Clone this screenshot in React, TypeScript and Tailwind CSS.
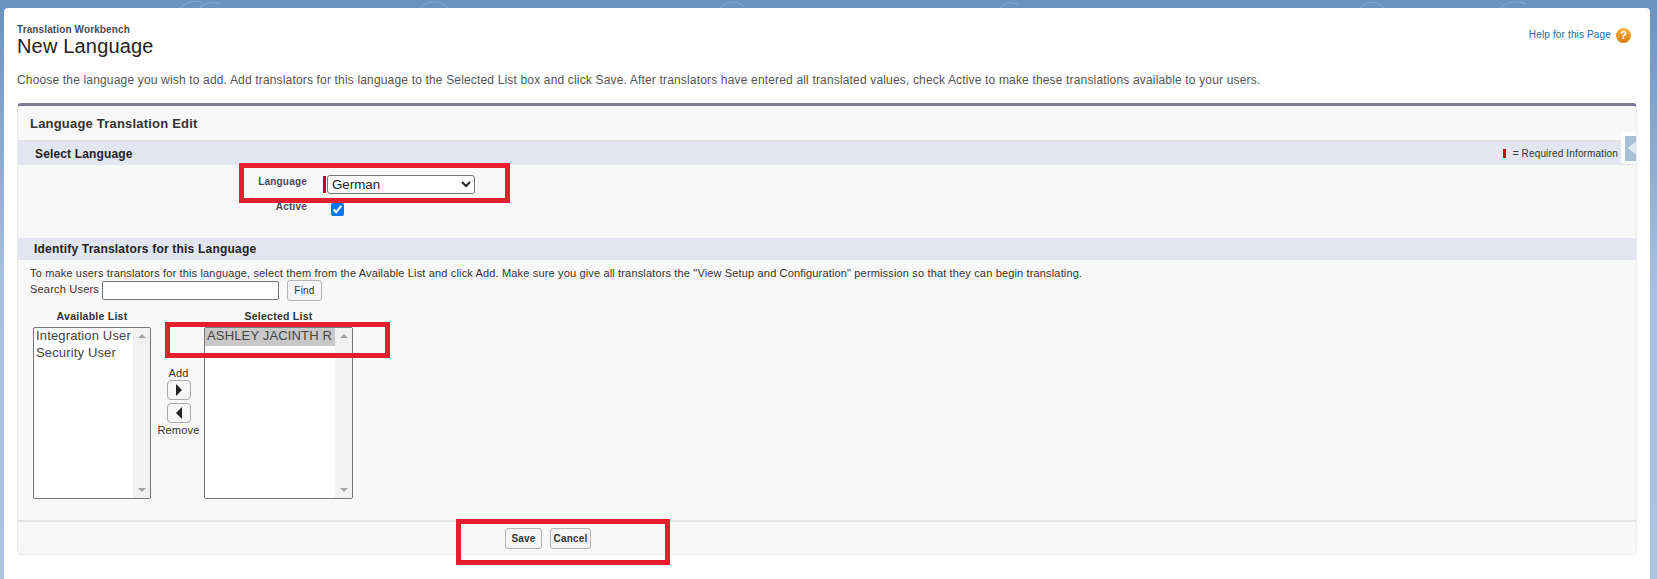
import React from "react";

function ListBox({ items, selected, widthClass }: { items: string[]; selected?: boolean; widthClass: string }) {
  return (
    <div className={`${widthClass} relative flex h-[172px] rounded-[2px] border border-[#767676] bg-white`}>
      <div className="-mt-[1px] min-w-0 flex-1 text-[13px] leading-[17px] tracking-[0.15px] text-[#444]">
        {items.map((it, i) => (
          <div key={it} className={`whitespace-nowrap pl-[2px] ${selected && i === 0 ? "mt-[1px] h-[18px] bg-[#c8c8c8] leading-[15px]" : "h-[17px]"}`}>
            {it}
          </div>
        ))}
      </div>
      <div className="flex h-full w-[17px] flex-col items-center justify-between bg-[#f1f1f1] py-[6px]">
        <div className="h-0 w-0 border-x-[4px] border-b-[4px] border-x-transparent border-b-[#a3a3a3]" />
        <div className="h-0 w-0 border-x-[4px] border-t-[4px] border-x-transparent border-t-[#a3a3a3]" />
      </div>
    </div>
  );
}

function ArrowButton({ dir }: { dir: "left" | "right" }) {
  return (
    <button className="flex h-[20px] w-[24px] items-center justify-center rounded-[4px] border border-[#a9a9a9] bg-[#f6f6f6]">
      {dir === "right" ? (
        <span className="h-0 w-0 border-y-[6px] border-l-[6px] border-y-transparent border-l-[#222]" />
      ) : (
        <span className="h-0 w-0 border-y-[6px] border-r-[6px] border-y-transparent border-r-[#222]" />
      )}
    </button>
  );
}

function PageButton({ children, className }: { children: React.ReactNode; className: string }) {
  return (
    <button className={`${className} h-[21px] rounded-[3px] border border-[#b5b5b5] bg-[#f5f5f5] text-center text-[10px] font-bold leading-[19px] tracking-[0.2px] text-[#333]`}>
      {children}
    </button>
  );
}

function RedBox({ className }: { className: string }) {
  return <div className={`pointer-events-none absolute border-[5px] border-[#e61e2d] ${className}`} />;
}

export default function App() {
  return (
    <div
      className="relative h-[579px] w-[1657px] overflow-hidden bg-gradient-to-b from-[#6a93c1] via-[#a9c0e2] to-[#aec2e2] pl-[4px] pr-[7px] pt-[8px] text-[#333]"
      style={{ fontFamily: '"Liberation Sans", Arial, sans-serif' }}
    >
      <svg className="absolute left-0 top-0 h-[8px] w-[1657px]" viewBox="0 0 1657 8" fill="none" stroke="#86a9cf" strokeWidth="1">
        <path d="M180 8c6-6 14-8 22-6M200 8c5-5 12-7 20-4M420 8c8-8 20-8 28 0M720 8c6-7 16-8 24-2M1000 8c5-6 12-7 18-3M1360 8c6-7 16-8 24 0M1500 8c8-6 16-8 26-4" />
      </svg>
      <div className="relative flex h-full flex-col rounded-t-[4px] bg-white pl-[13px] pr-[13px]">
        <div className="flex h-[54px] items-start justify-between">
          <div>
            <div className="pt-[16px] text-[10px] font-bold leading-[12px] tracking-[0.12px] text-[#4a4a56]">Translation Workbench</div>
            <h1 className="-mt-[1px] text-[20px] font-normal leading-[23px] tracking-[0.17px] text-[#222]">New Language</h1>
          </div>
          <div className="flex items-center gap-[5px] pr-[6px] pt-[16px]">
            <a className="text-[10px] leading-[22px] tracking-[0.15px] text-[#1b6aa5]">Help for this Page</a>
            <span className="flex h-[15px] w-[15px] items-center justify-center rounded-full bg-gradient-to-b from-[#f6b73c] to-[#d97a0c] text-[11px] font-bold leading-none text-white">?</span>
          </div>
        </div>

        <p className="mt-[10px] text-[12px] leading-[16px] tracking-[0.165px] text-[#555]">
          Choose the language you wish to add. Add translators for this language to the Selected List box and click Save. After translators have entered all translated values, check Active to make these translations available to your users.
        </p>

        <div className="relative mt-[15px] h-[452px] rounded-[4px] border-x border-b border-t-[3px] border-[#ececec] border-t-[#7b7b96] bg-[#f8f8f8]">
          <div className="flex h-[36px] items-center border-b-2 border-[#e3e3e3] pl-[12px] pt-[1px] text-[13px] font-bold tracking-[0.2px] text-[#333]">
            Language Translation Edit
          </div>

          <div className="flex h-[23px] items-center justify-between bg-[#e3e6f0] pl-[17px] pr-[6px]">
            <span className="text-[12px] font-bold tracking-[0.15px] text-[#222]">Select Language</span>
            <span className="mb-[1px] flex items-center gap-[7px] pr-[12px] text-[10px] tracking-[0.15px] text-[#333]">
              <span className="h-[9px] w-[3px] bg-[#c00]" />= Required Information
            </span>
          </div>

          <div className="h-[73px]">
            <div className="flex h-[35px] items-start pt-[10px]">
              <label className="mt-[1px] w-[289px] text-right text-[10px] font-bold leading-[12px] tracking-[0.2px] text-[#4a4a56]">Language</label>
              <span className="ml-[16px] mt-[1px] h-[17px] w-[3px] bg-[#c00]" />
              <select className="ml-[1px] h-[19px] w-[148px] rounded-[3px] border border-[#767676] bg-white text-[13.3px] leading-[17px] text-[#222]" defaultValue="German">
                <option>German</option>
              </select>
            </div>
            <div className="flex items-start">
              <label className="mt-[1px] w-[289px] text-right text-[10px] font-bold leading-[12px] tracking-[0.2px] text-[#4a4a56]">Active</label>
              <input type="checkbox" defaultChecked className="ml-[24px] mt-[3px] h-[13px] w-[13px]" />
            </div>
          </div>

          <div className="flex h-[22px] items-center bg-[#e3e6f0] pb-[1px] pl-[16px] text-[12px] font-bold tracking-[0.2px] text-[#222]">
            Identify Translators for this Language
          </div>

          <div className="pl-[12px]">
            <p className="pt-[7px] text-[11px] leading-[13px] tracking-[0.155px] text-[#333]">
              To make users translators for this language, select them from the Available List and click Add. Make sure you give all translators the "View Setup and Configuration" permission so that they can begin translating.
            </p>
            <div className="flex h-[20px] items-center">
              <span className="mb-[2px] w-[72px] text-[11px] tracking-[0.2px] text-[#333]">Search Users</span>
              <input className="h-[19px] w-[177px] rounded-[2px] border border-[#767676] bg-white" />
              <PageButton className="ml-[8px] w-[35px] font-normal">Find</PageButton>
            </div>

            <div className="mt-[8px] flex items-start pl-[3px]">
              <div className="flex flex-col items-center">
                <div className="h-[19px] text-[10.5px] font-bold leading-[16px] tracking-[0.25px] text-[#333]">Available List</div>
                <ListBox items={["Integration User", "Security User"]} widthClass="w-[118px]" />
              </div>
              <div className="flex w-[55px] flex-col items-center pt-[59px]">
                <div className="h-[13px] text-[11px] leading-[13px] tracking-[0.15px] text-[#333]">Add</div>
                <ArrowButton dir="right" />
                <div className="h-[3px]" />
                <ArrowButton dir="left" />
                <div className="pt-[1px] text-[11px] leading-[13px] tracking-[0.2px] text-[#333]">Remove</div>
              </div>
              <div className="-ml-[2px] flex flex-col items-center">
                <div className="h-[19px] text-[10.5px] font-bold leading-[16px] tracking-[0.25px] text-[#333]">Selected List</div>
                <ListBox items={["ASHLEY JACINTH R"]} selected widthClass="w-[149px]" />
              </div>
            </div>
          </div>

          <div className="absolute bottom-0 left-0 right-0 flex h-[34px] items-start gap-[8px] border-t-2 border-[#e3e3e3] pl-[487px] pt-[6px]">
            <PageButton className="w-[37px]">Save</PageButton>
            <PageButton className="w-[41px]">Cancel</PageButton>
          </div>

          <div className="absolute right-0 top-[26px] flex h-[32px] w-[15px] items-center rounded-l-[3px] bg-white pl-[4px]">
            <div className="flex h-[25px] w-[11px] items-center justify-end bg-[#a9c0d6]">
              <div className="h-0 w-0 border-y-[7px] border-r-[8px] border-y-transparent border-r-[#dfe9f2]" />
            </div>
          </div>
        </div>

        <RedBox className="left-[235px] top-[155px] h-[40px] w-[271px]" />
        <RedBox className="left-[161px] top-[314px] h-[36px] w-[225px]" />
        <RedBox className="left-[452px] top-[511px] h-[46px] w-[214px]" />
      </div>
    </div>
  );
}
